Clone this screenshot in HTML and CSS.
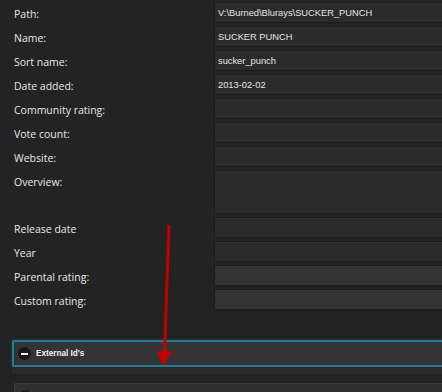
FILE: index.html
```html
<!DOCTYPE html>
<html lang="en">
<head>
    <meta charset="UTF-8">
    <meta name="viewport" content="width=device-width, initial-scale=1.0">
    <title>Metadata editor</title>
    <link rel="stylesheet" href="styles.css">
</head>
<body>
    <div class="form">
        <div class="row"><label>Path:</label><input type="text" value="V:\Burned\Blurays\SUCKER_PUNCH"></div>
        <div class="row"><label>Name:</label><input type="text" value="SUCKER PUNCH"></div>
        <div class="row"><label>Sort name:</label><input type="text" value="sucker_punch"></div>
        <div class="row"><label>Date added:</label><input type="text" value="2013-02-02"></div>
        <div class="row"><label>Community rating:</label><input type="text"></div>
        <div class="row"><label>Vote count:</label><input type="text"></div>
        <div class="row"><label>Website:</label><input type="text"></div>
        <div class="row"><label>Overview:</label><textarea></textarea></div>
        <div class="row"><label>Release date</label><input type="text"></div>
        <div class="row"><label>Year</label><input type="text"></div>
        <div class="row"><label>Parental rating:</label><input type="text" class="light"></div>
        <div class="row"><label>Custom rating:</label><input type="text" class="light"></div>
    </div>

    <div class="collapsible open">
        <span class="toggle minus"></span>
        <span class="title">External Id's</span>
    </div>
    <div class="collapsible-body"></div>

    <div class="collapsible closed">
        <span class="toggle plus"></span>
        <span class="title">Genres</span>
    </div>

    <svg class="annotation" width="442" height="392" viewBox="0 0 442 392">
        <line x1="169" y1="225" x2="164.5" y2="353" stroke="#c30000" stroke-width="3"/>
        <polygon points="156.5,351 172,351 163.5,366" fill="#c30000"/>
    </svg>
</body>
</html>
```

FILE: styles.css
```css
body {
    margin: 0;
    background-color: #232323;
    font-family: "Open Sans", sans-serif;
    color: #e6e6e6;
    overflow: hidden;
    position: relative;
    height: 392px;
}
.form {
    padding: 2px 0 0 14px;
}
.row {
    display: flex;
    margin-bottom: 3px;
}
.row label {
    width: 200px;
    flex: none;
    padding-top: 3px;
    line-height: 18px;
    font-size: 10.5px;
}
.row input, .row textarea {
    flex: 1;
    min-width: 0;
    margin-right: -6px;
    height: 21px;
    box-sizing: border-box;
    background-color: #2b2b2b;
    border: 1px solid #1b1b1b;
    box-shadow: inset 0 1px 0 #303030;
    color: #e6e6e6;
    font: 9.3px "Liberation Sans", Arial, sans-serif;
    padding: 0 4px 0 3px;
    outline: none;
    resize: none;
}
.row textarea {
    height: 44px;
}
.row input.light {
    background-color: #333;
    box-shadow: inset 0 1px 0 #383838;
}
.collapsible {
    display: flex;
    align-items: center;
    height: 27px;
    box-sizing: border-box;
    margin-left: 12px;
    margin-top: 30px;
    padding-left: 4px;
    background-color: #343434;
    border: 2px solid #2a7891;
    border-right: none;
    border-radius: 2px 0 0 2px;
    box-shadow: 0 0 3px #1b5063;
}
.collapsible .title {
    font: bold 8.2px "Liberation Sans", Arial, sans-serif;
    color: #f2f2f2;
    margin-left: 5px;
}
.toggle {
    width: 13px;
    height: 13px;
    border-radius: 50%;
    background-color: #1a1a1a;
    position: relative;
}
.toggle::before {
    content: "";
    position: absolute;
    left: 3px;
    top: 5.5px;
    width: 7px;
    height: 2px;
    background-color: #f2f2f2;
}
.toggle.plus::after {
    content: "";
    position: absolute;
    left: 5.5px;
    top: 3px;
    width: 2px;
    height: 7px;
    background-color: #f2f2f2;
}
.collapsible-body {
    margin-left: 12px;
    height: 7px;
    background-color: #2a2a2a;
}
.collapsible.closed {
    margin-top: 9px;
    margin-left: 14px;
    border: 1px solid #3a3a3a;
    border-right: none;
    box-shadow: none;
    background-color: #303030;
}
.annotation {
    position: absolute;
    left: 0;
    top: 0;
    pointer-events: none;
}
```
